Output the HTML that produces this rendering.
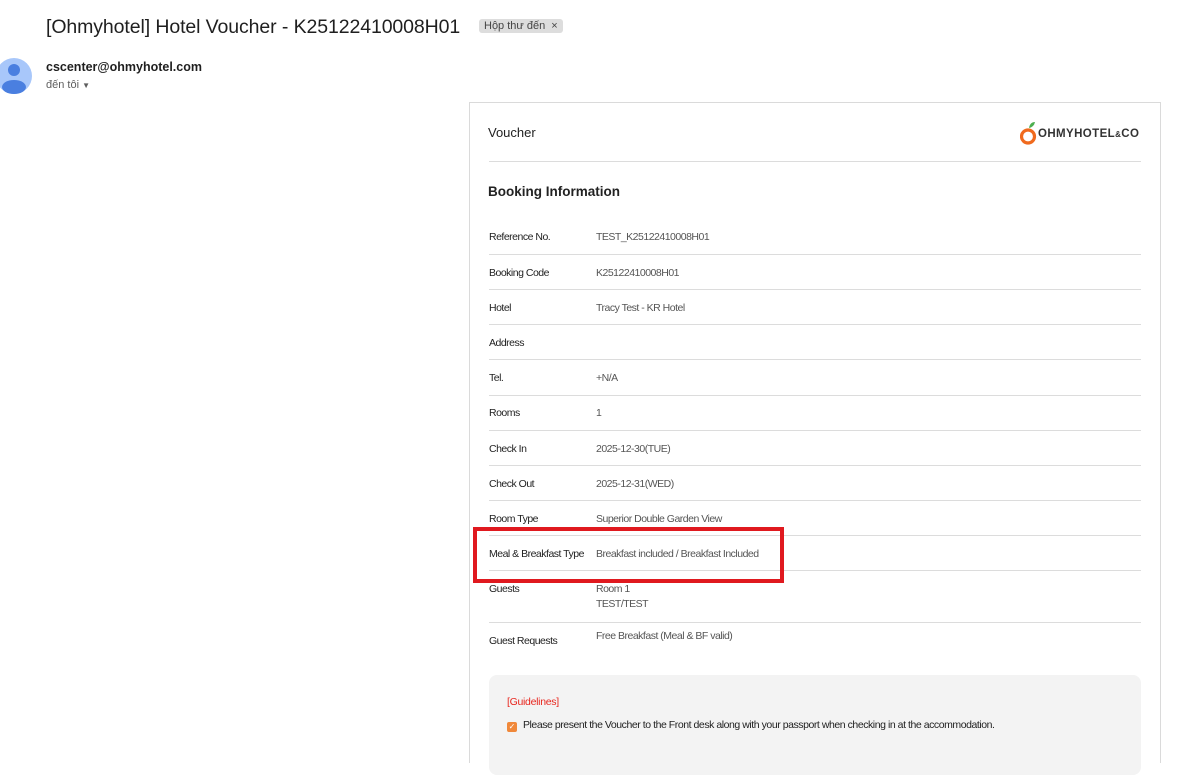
<!DOCTYPE html>
<html><head><meta charset="utf-8"><style>
body{margin:0;width:1180px;height:740px;overflow:hidden;background:#fff;font-family:"Liberation Sans",sans-serif;position:relative}
.abs{position:absolute}
.title{left:46px;top:16px;font-size:19.5px;color:#1f1f1f;white-space:nowrap;letter-spacing:-0.1px}
.tag{left:479px;top:19px;background:#dddddd;color:#444;font-size:11px;padding:1px 5px;border-radius:3px}
.card{left:469px;top:102px;width:690px;height:660px;border:1px solid #dadada;border-bottom:none}
.row{position:absolute;left:19px;width:652px;font-size:10.5px;letter-spacing:-0.5px;color:#222}
.row .v{position:absolute;left:107px;color:#555}
.sep{position:absolute;left:19px;width:652px;height:1px;background:#dcdcdc}
</style></head><body>
<div class="abs title">[Ohmyhotel] Hotel Voucher - K25122410008H01</div>
<div class="abs tag">Hộp thư đến &nbsp;×</div>
<svg class="abs" style="left:0;top:58px" width="32" height="38" viewBox="0 0 32 38"><circle cx="14" cy="18" r="18" fill="#a8c7fa"/><circle cx="14" cy="12" r="6" fill="#4a7fe0"/><ellipse cx="14" cy="29" rx="12" ry="7" fill="#4a7fe0"/></svg>
<div class="abs" style="left:46px;top:60px;font-size:12.5px;font-weight:bold;color:#1f1f1f">cscenter@ohmyhotel.com</div>
<div class="abs" style="left:46px;top:79px;font-size:11px;color:#5e5e5e">đến tôi <span style="font-size:8px">▼</span></div>
<div class="abs card">
<div class="abs" style="left:18px;top:22px;font-size:13px;color:#222">Voucher</div>
<div class="abs" style="left:550px;top:17px;width:122px;height:26px">
<svg class="abs" style="left:0;top:0" width="18" height="26" viewBox="0 0 18 26"><circle cx="8" cy="16.5" r="6.5" fill="none" stroke="#f06a1e" stroke-width="3.2"/><path d="M9 8 Q10 2 15 2 Q14 7 9 8Z" fill="#4caf50"/></svg>
<span class="abs" style="left:18px;top:8px;font-size:11.5px;font-weight:bold;color:#333;letter-spacing:0.4px;white-space:nowrap">OHMYHOTEL<span style="font-size:8px">&amp;</span>CO</span>
</div>
<div class="sep" style="top:58px"></div>
<div class="abs" style="left:18px;top:81px;font-size:13.5px;font-weight:bold;color:#222">Booking Information</div>
<div class="row" style="top:128px">Reference No.<span class="v">TEST_K25122410008H01</span></div>
<div class="sep" style="top:151px"></div>
<div class="row" style="top:164px">Booking Code<span class="v">K25122410008H01</span></div>
<div class="sep" style="top:186px"></div>
<div class="row" style="top:199px">Hotel<span class="v">Tracy Test - KR Hotel</span></div>
<div class="sep" style="top:221px"></div>
<div class="row" style="top:234px">Address</div>
<div class="sep" style="top:256px"></div>
<div class="row" style="top:269px">Tel.<span class="v">+N/A</span></div>
<div class="sep" style="top:292px"></div>
<div class="row" style="top:304px">Rooms<span class="v">1</span></div>
<div class="sep" style="top:327px"></div>
<div class="row" style="top:340px">Check In<span class="v">2025-12-30(TUE)</span></div>
<div class="sep" style="top:362px"></div>
<div class="row" style="top:375px">Check Out<span class="v">2025-12-31(WED)</span></div>
<div class="sep" style="top:397px"></div>
<div class="row" style="top:410px">Room Type<span class="v">Superior Double Garden View</span></div>
<div class="sep" style="top:432px"></div>
<div class="row" style="top:445px">Meal &amp; Breakfast Type<span class="v">Breakfast included / Breakfast Included</span></div>
<div class="sep" style="top:467px"></div>
<div class="row" style="top:480px">Guests<span class="v">Room 1<br><span style="line-height:19px">TEST/TEST</span></span></div>
<div class="sep" style="top:519px"></div>
<div class="row" style="top:532px">Guest Requests<span class="v" style="top:-5px">Free Breakfast (Meal &amp; BF valid)</span></div>
<div class="abs" style="left:19px;top:572px;width:652px;height:100px;background:#f3f3f3;border-radius:8px">
<div class="abs" style="left:18px;top:21px;font-size:10.5px;color:#e8261e;letter-spacing:-0.3px">[Guidelines]</div>
<div class="abs" style="left:18px;top:47px;width:10px;height:10px;background:#f0883a;border-radius:2px;color:#fff;font-size:8px;line-height:10px;text-align:center">✓</div>
<div class="abs" style="left:34px;top:44px;font-size:10.5px;letter-spacing:-0.45px;color:#222;white-space:nowrap">Please present the Voucher to the Front desk along with your passport when checking in at the accommodation.</div>
</div>
</div>
<div class="abs" style="left:473px;top:527px;width:303px;height:48px;border:4px solid #e0191f"></div>
</body></html>
